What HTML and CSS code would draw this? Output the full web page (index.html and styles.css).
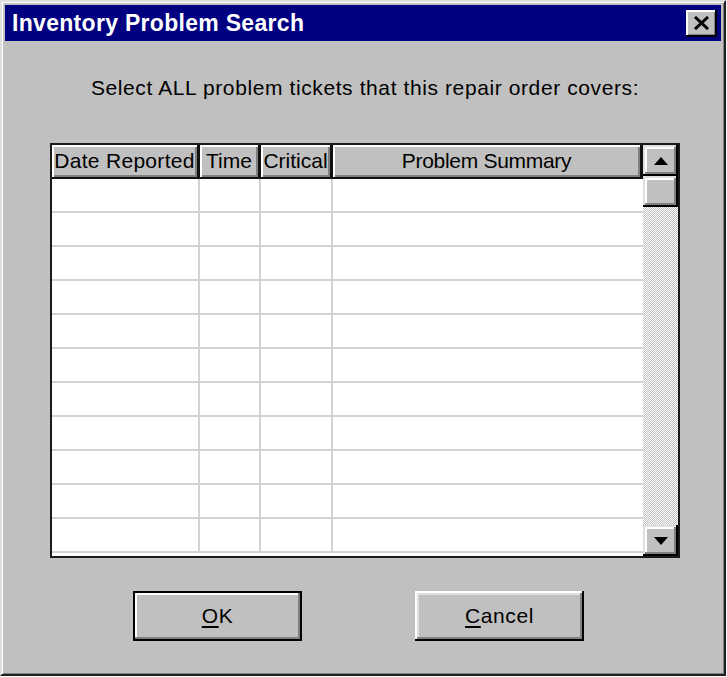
FILE: index.html
```html
<!DOCTYPE html>
<html lang="en">
<head>
<meta charset="utf-8">
<title>Inventory Problem Search</title>
<link rel="stylesheet" href="styles.css">
</head>
<body>
<div class="window">
  <div class="titlebar">
    <span class="title">Inventory Problem Search</span>
    <button class="close" aria-label="Close">
      <svg width="17" height="14" viewBox="0 0 17 14"><path d="M2 1 L15 13 M15 1 L2 13" stroke="#000" stroke-width="3" fill="none"/></svg>
    </button>
  </div>
  <div class="body">
    <p class="prompt">Select ALL problem tickets that this repair order covers:</p>
    <div class="grid">
      <div class="table">
        <div class="row head">
          <div class="cell c-date">Date Reported</div>
          <div class="cell c-time">Time</div>
          <div class="cell c-crit">Critical</div>
          <div class="cell c-sum">Problem Summary</div>
        </div>
        <div class="rows">
          <div class="row"><div class="cell c-date"></div><div class="cell c-time"></div><div class="cell c-crit"></div><div class="cell c-sum"></div></div>
          <div class="row"><div class="cell c-date"></div><div class="cell c-time"></div><div class="cell c-crit"></div><div class="cell c-sum"></div></div>
          <div class="row"><div class="cell c-date"></div><div class="cell c-time"></div><div class="cell c-crit"></div><div class="cell c-sum"></div></div>
          <div class="row"><div class="cell c-date"></div><div class="cell c-time"></div><div class="cell c-crit"></div><div class="cell c-sum"></div></div>
          <div class="row"><div class="cell c-date"></div><div class="cell c-time"></div><div class="cell c-crit"></div><div class="cell c-sum"></div></div>
          <div class="row"><div class="cell c-date"></div><div class="cell c-time"></div><div class="cell c-crit"></div><div class="cell c-sum"></div></div>
          <div class="row"><div class="cell c-date"></div><div class="cell c-time"></div><div class="cell c-crit"></div><div class="cell c-sum"></div></div>
          <div class="row"><div class="cell c-date"></div><div class="cell c-time"></div><div class="cell c-crit"></div><div class="cell c-sum"></div></div>
          <div class="row"><div class="cell c-date"></div><div class="cell c-time"></div><div class="cell c-crit"></div><div class="cell c-sum"></div></div>
          <div class="row"><div class="cell c-date"></div><div class="cell c-time"></div><div class="cell c-crit"></div><div class="cell c-sum"></div></div>
          <div class="row"><div class="cell c-date"></div><div class="cell c-time"></div><div class="cell c-crit"></div><div class="cell c-sum"></div></div>
        </div>
      </div>
      <div class="scrollbar">
        <div class="sb-btn">
          <svg width="14" height="8" viewBox="0 0 14 8"><path d="M7 0 L14 8 L0 8 Z" fill="#000"/></svg>
        </div>
        <div class="sb-thumb"></div>
        <div class="sb-track"></div>
        <div class="sb-btn">
          <svg width="14" height="8" viewBox="0 0 14 8"><path d="M0 0 L14 0 L7 8 Z" fill="#000"/></svg>
        </div>
      </div>
    </div>
    <div class="buttons">
      <button class="btn default"><u>O</u>K</button>
      <button class="btn"><u>C</u>ancel</button>
    </div>
  </div>
</div>
</body>
</html>
```

FILE: styles.css
```css
html, body {
  margin: 0;
  padding: 0;
  background: #fff;
}

body {
  font-family: "Liberation Sans", Arial, sans-serif;
  color: #000;
}

.window {
  width: 726px;
  height: 676px;
  box-sizing: border-box;
  background: #c0c0c0;
  border-top: 2px solid #dfdfdf;
  border-left: 2px solid #dfdfdf;
  border-right: 2px solid #202020;
  border-bottom: 2px solid #202020;
  box-shadow: inset 1px 1px 0 #fff, inset -1px -1px 0 #808080;
  padding: 3px;
  display: flex;
  flex-direction: column;
}

.titlebar {
  height: 36px;
  background: #000080;
  display: flex;
  align-items: center;
  justify-content: space-between;
  padding: 0 4px 0 7px;
}

.title {
  color: #fff;
  font-weight: bold;
  font-size: 23px;
  letter-spacing: 0.3px;
}

.close {
  width: 31px;
  height: 27px;
  padding: 0;
  background: #c0c0c0;
  border: none;
  box-shadow: inset -2px -2px 0 #000, inset 2px 2px 0 #fff, inset -3px -3px 0 #808080;
  display: flex;
  align-items: center;
  justify-content: center;
}

.body {
  flex: 1;
  display: flex;
  flex-direction: column;
  align-items: stretch;
}

.prompt {
  margin: 34px 0 0;
  text-align: center;
  font-size: 21px;
  line-height: 26px;
  letter-spacing: 0.6px;
  padding-left: 4px;
}

.grid {
  margin: 42px 0 0 45px;
  width: 630px;
  height: 415px;
  box-sizing: border-box;
  border: 2px solid #1a1a1a;
  display: flex;
  background: #fff;
  overflow: hidden;
}

.table {
  width: 591px;
  display: flex;
  flex-direction: column;
}

.row {
  display: flex;
  height: 34px;
  box-sizing: border-box;
  border-bottom: 2px solid #d2d2d2;
}

.rows {
  flex: 1;
  overflow: hidden;
}

.cell {
  box-sizing: border-box;
  border-right: 2px solid #d2d2d2;
}

.c-date { width: 148px; }
.c-time { width: 61px; }
.c-crit { width: 72px; }
.c-sum  { width: 310px; border-right: none; }

.row.head {
  height: 34px;
  border-bottom: 2px solid #111;
  background: #c0c0c0;
}

.head .cell {
  border-right: 3px solid #111;
  box-shadow: inset 2px 2px 0 #fff, inset -2px -2px 0 #808080;
  font-size: 21px;
  line-height: 32px;
  text-align: center;
  white-space: nowrap;
  overflow: hidden;
}

.head .c-date {
  letter-spacing: 0.3px;
}

.head .c-sum {
  border-right: 3px solid #111;
  letter-spacing: -0.3px;
}

.scrollbar {
  width: 35px;
  display: flex;
  flex-direction: column;
  background: #c0c0c0;
}

.sb-btn,
.sb-thumb {
  height: 31px;
  flex: none;
  box-sizing: border-box;
  background: #c0c0c0;
  box-shadow: inset -2px -2px 0 #000, inset 2px 2px 0 #dfdfdf, inset -4px -4px 0 #808080, inset 4px 4px 0 #fff;
  display: flex;
  align-items: center;
  justify-content: center;
}

.sb-track {
  flex: 1;
  background: repeating-conic-gradient(#c0c0c0 0 25%, #fff 0 50%) 0 0 / 2px 2px;
}

.buttons {
  margin-top: 33px;
  display: flex;
  padding-left: 128px;
  gap: 113px;
}

.btn {
  width: 169px;
  height: 50px;
  padding: 0;
  font-family: "Liberation Sans", Arial, sans-serif;
  font-size: 21px;
  letter-spacing: 0.6px;
  background: #c0c0c0;
  border: none;
  box-shadow: inset -2px -2px 0 #000, inset 2px 2px 0 #fff, inset -4px -4px 0 #808080, inset 4px 4px 0 #dfdfdf;
  color: #000;
}

.btn.default {
  box-shadow: inset 0 0 0 2px #000, inset -4px -4px 0 #808080, inset 4px 4px 0 #fff;
}

.btn u {
  text-underline-offset: 3px;
}
```
